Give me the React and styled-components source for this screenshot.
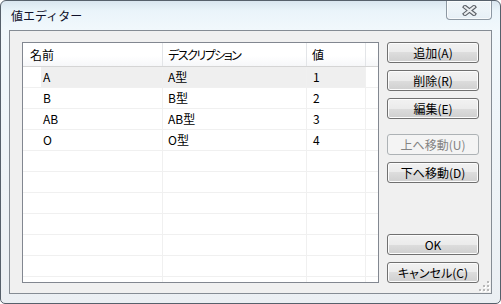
import React from "react";
import styled, { createGlobalStyle } from "styled-components";

const GlobalStyle = createGlobalStyle`
  html, body {
    margin: 0;
    padding: 0;
    background: #ffffff;
  }
  body {
    font-family: "Noto Sans CJK JP", "Liberation Sans", sans-serif;
    font-size: 12px;
    color: #000000;
  }
`;

const Window = styled.div`
  box-sizing: border-box;
  width: 501px;
  height: 304px;
  display: flex;
  flex-direction: column;
  padding: 0 8px 9px 8px;
  border: 1px solid #56606b;
  border-radius: 6px 6px 5px 5px;
  background: linear-gradient(
    180deg,
    #d9e5ef 0px,
    #eaf4fa 10px,
    #f1f8fc 28px,
    #eef3f7 60%,
    #ebeff3 100%
  );
  overflow: hidden;
`;

const TitleBar = styled.div`
  height: 29px;
  display: flex;
  align-items: flex-start;
  flex-shrink: 0;
`;

const TitleText = styled.div`
  margin-top: 7px;
  padding-left: 2px;
  line-height: 16px;
  font-size: 12px;
  color: #10102a;
`;

const CloseButton = styled.div`
  box-sizing: border-box;
  margin-left: auto;
  width: 46px;
  height: 19px;
  display: flex;
  align-items: center;
  justify-content: center;
  border: 1px solid #8d98a3;
  border-top: none;
  border-radius: 0 0 4px 4px;
  background: linear-gradient(180deg, rgba(255, 255, 255, 0.55), rgba(225, 234, 242, 0.6));
  box-shadow: inset 0 0 0 1px rgba(255, 255, 255, 0.7);
`;

const Client = styled.div`
  position: relative;
  flex: 1;
  min-height: 0;
  display: flex;
  gap: 8px;
  padding: 11px 12px 10px 12px;
  border: 1px solid #858c94;
  background: #f0f0f0;
  overflow: hidden;
`;

const ListView = styled.div`
  box-sizing: border-box;
  width: 357px;
  min-height: 0;
  display: flex;
  flex-direction: column;
  border: 1px solid #828790;
  background: #ffffff;
  overflow: hidden;
`;

const columns = "140px 144px 59px 1fr";

const HeaderRow = styled.div`
  box-sizing: border-box;
  display: grid;
  grid-template-columns: ${columns};
  height: 24px;
  flex-shrink: 0;
  border-bottom: 1px solid #d5d5d5;
  background: linear-gradient(180deg, #ffffff 0%, #ffffff 55%, #f6f7f9 100%);
`;

const HeaderCell = styled.div`
  border-right: 1px solid #e3e5e8;
  padding-left: ${(p) => p.$indent}px;
  line-height: 23px;
  font-feature-settings: "palt";
  letter-spacing: ${(p) => (p.$tight ? "-1.5px" : "0")};
  white-space: nowrap;
  overflow: hidden;
`;

const Row = styled.div`
  box-sizing: border-box;
  display: grid;
  grid-template-columns: ${columns};
  height: 21px;
  flex-shrink: 0;
  border-bottom: 1px solid #f0f0f0;
`;

const Cell = styled.div`
  display: flex;
  border-right: 1px solid #f0f0f0;
  padding-left: ${(p) => p.$indent}px;
  line-height: 20px;
  background: ${(p) => (p.$selected ? "#efefef" : "transparent")};
  white-space: nowrap;
  font-feature-settings: "palt";
`;

const FirstCell = styled.div`
  display: flex;
  padding-left: 18px;
  border-right: 1px solid #f0f0f0;
`;

const FirstLabel = styled.div`
  flex: 1;
  padding-left: 2px;
  line-height: 20px;
  background: ${(p) => (p.$selected ? "#efefef" : "transparent")};
`;

const Filler = styled.div``;

const ButtonColumn = styled.div`
  width: 92px;
  display: flex;
  flex-direction: column;
  gap: 7px;
`;

const Button = styled.div`
  box-sizing: border-box;
  height: 21px;
  flex-shrink: 0;
  margin-top: ${(p) => p.$push || 0};
  display: flex;
  align-items: center;
  justify-content: center;
  border: 1px solid ${(p) => (p.$disabled ? "#adb2b5" : "#707070")};
  border-radius: 3px;
  background: ${(p) =>
    p.$disabled
      ? "#f4f4f4"
      : "linear-gradient(180deg, #f2f2f2 0%, #ebebeb 50%, #dddddd 50%, #cfcfcf 100%)"};
  box-shadow: inset 0 0 0 1px ${(p) => (p.$disabled ? "#f4f4f4" : "#fcfcfc")};
  color: ${(p) => (p.$disabled ? "#838383" : "#000000")};
  line-height: 16px;
  font-feature-settings: "palt";
  white-space: nowrap;
`;

const Grip = styled.svg`
  position: absolute;
  right: 1px;
  bottom: 1px;
`;

const rows = [
  { name: "A", desc: "A型", value: "1", selected: true },
  { name: "B", desc: "B型", value: "2" },
  { name: "AB", desc: "AB型", value: "3" },
  { name: "O", desc: "O型", value: "4" },
  {}, {}, {}, {}, {}, {}, {},
];

function CloseGlyph() {
  return (
    <svg width="15" height="11" viewBox="0 0 15 11">
      <path d="M3 2 L12 9 M12 2 L3 9" stroke="#5c6168" strokeWidth="4.2" strokeLinecap="square" fill="none" />
      <path d="M3 2 L12 9 M12 2 L3 9" stroke="#e9ecef" strokeWidth="2" strokeLinecap="square" fill="none" />
    </svg>
  );
}

function ResizeGrip() {
  const dots = [
    [8, 0],
    [4, 4], [8, 4],
    [0, 8], [4, 8], [8, 8],
  ];
  return (
    <Grip width="11" height="11" viewBox="0 0 11 11">
      {dots.map(([x, y]) => (
        <g key={`${x}-${y}`}>
          <rect x={x + 1} y={y + 1} width="2" height="2" fill="#ffffff" />
          <rect x={x} y={y} width="2" height="2" fill="#b8b8b8" />
        </g>
      ))}
    </Grip>
  );
}

export default function App() {
  return (
    <>
      <GlobalStyle />
      <Window>
        <TitleBar>
          <TitleText>値エディター</TitleText>
          <CloseButton>
            <CloseGlyph />
          </CloseButton>
        </TitleBar>
        <Client>
          <ListView>
            <HeaderRow>
              <HeaderCell $indent={7}>名前</HeaderCell>
              <HeaderCell $indent={5} $tight>デスクリプション</HeaderCell>
              <HeaderCell $indent={5}>値</HeaderCell>
              <Filler />
            </HeaderRow>
            {rows.map((r, i) => (
              <Row key={i}>
                <FirstCell>
                  <FirstLabel $selected={r.selected}>{r.name}</FirstLabel>
                </FirstCell>
                <Cell $indent={5} $selected={r.selected}>{r.desc}</Cell>
                <Cell $indent={6} $selected={r.selected}>{r.value}</Cell>
                <Filler />
              </Row>
            ))}
          </ListView>
          <ButtonColumn>
            <Button>追加(A)</Button>
            <Button>削除(R)</Button>
            <Button>編集(E)</Button>
            <Button $disabled $push="8px">上へ移動(U)</Button>
            <Button>下へ移動(D)</Button>
            <Button $push="auto">OK</Button>
            <Button>キャンセル(C)</Button>
          </ButtonColumn>
          <ResizeGrip />
        </Client>
      </Window>
    </>
  );
}
